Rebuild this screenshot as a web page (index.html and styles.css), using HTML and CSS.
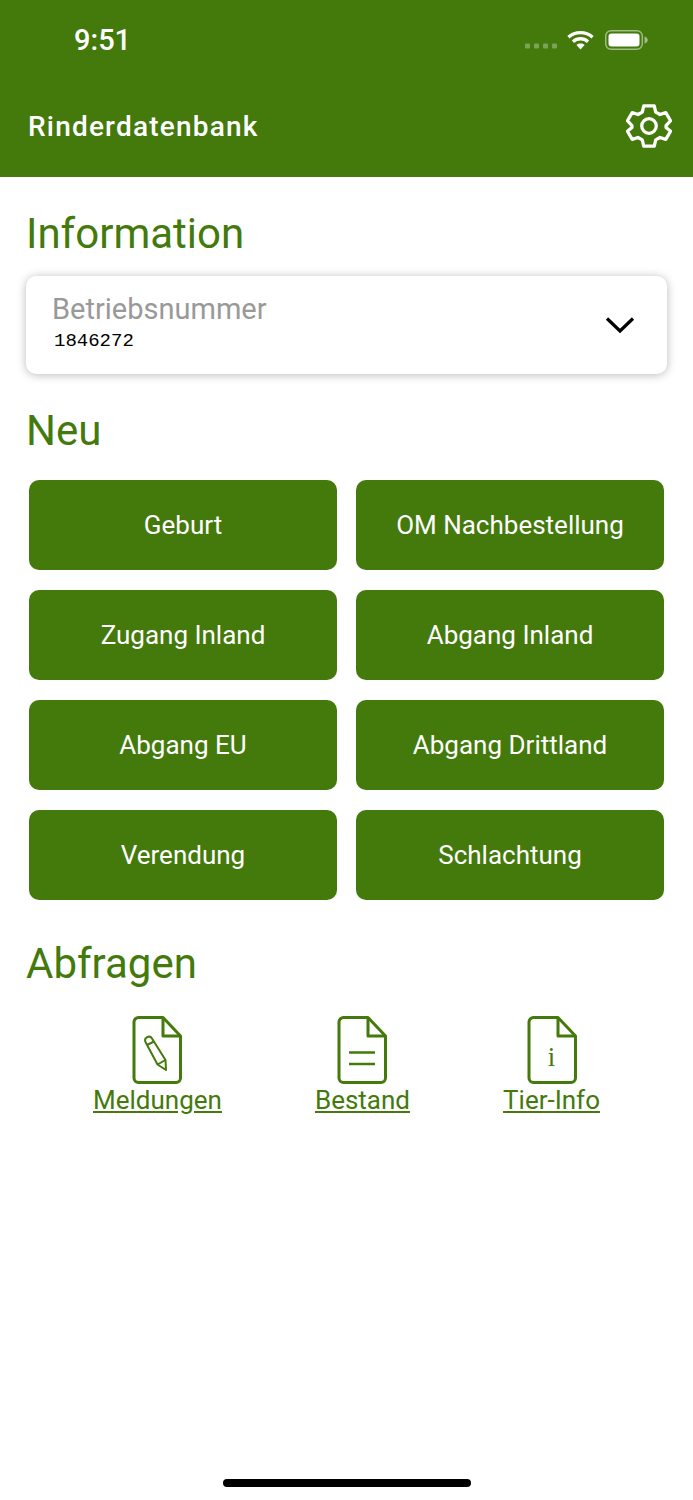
FILE: index.html
```html
<!DOCTYPE html>
<html lang="de">
<head>
    <meta charset="UTF-8">
    <meta name="viewport" content="width=device-width, initial-scale=1.0">
    <title>Rinderdatenbank</title>
    <link rel="stylesheet" href="styles.css">
</head>
<body>
    <header class="top">
        <div class="status">
            <span class="time">9:51</span>
            <div class="status-icons">
                <svg class="signal" width="32" height="6" viewBox="0 0 32 6"><g fill="#fff" opacity="0.3"><rect x="0" y="0.5" width="5" height="5" rx="1"/><rect x="9" y="0.5" width="5" height="5" rx="1"/><rect x="18" y="0.5" width="5" height="5" rx="1"/><rect x="27" y="0.5" width="5" height="5" rx="1"/></g></svg>
                <svg class="wifi" width="27" height="20" viewBox="0 0 28 20"><g fill="none" stroke="#fff" stroke-width="3.4"><path d="M1.5 7.2C8.5 .8 19.5 .8 26.5 7.2"/><path d="M6.2 11.7C10.8 7.7 17.2 7.7 21.8 11.7"/></g><path d="M9.8 15.2C12.2 13.2 15.8 13.2 18.2 15.2L14 19.8Z" fill="#fff"/></svg>
                <svg class="battery" width="43" height="20" viewBox="0 0 43 20"><rect x="0.7" y="0.7" width="36.6" height="18.600" rx="5.500" fill="none" stroke="#fff" stroke-opacity="0.5" stroke-width="1.4"/><rect x="3.500" y="3.500" width="31" height="13" rx="3" fill="#fff"/><path d="M39.500 6.500C41.500 7 42.800 8.500 42.800 10S41.500 13 39.500 13.500Z" fill="#fff" opacity="0.5"/></svg>
            </div>
        </div>
        <div class="toolbar">
            <span class="app-title">Rinderdatenbank</span>
            <svg class="gear" width="46" height="46" viewBox="0 0 48 48" fill="none" stroke="#fff" stroke-width="3.4" stroke-linejoin="round"><path d="M18.5 3H29.5L31 9.5L35.5 12L41.5 10L46.5 18.5L41.8 23.5V25.5L46.5 29.5L41.5 38L35.5 36L31 38.5L29.5 45H18.5L17 38.5L12.5 36L6.5 38L1.5 29.5L6.2 25.5V23.5L1.5 18.5L6.5 10L12.5 12L17 9.5Z"/><circle cx="24" cy="24" r="7.6"/></svg>
        </div>
    </header>

    <main class="content">
        <h2 class="section-title title-info">Information</h2>
        <div class="select-card">
            <div class="select-text">
                <div class="select-label">Betriebsnummer</div>
                <div class="select-value">1846272</div>
            </div>
            <svg class="chevron" width="30" height="18" viewBox="0 0 30 18" fill="none" stroke="#000" stroke-width="3.2"><path d="M2 2.5L15 15L28 2.5"/></svg>
        </div>

        <h2 class="section-title title-new">Neu</h2>
        <div class="button-grid">
            <a class="action-btn">Geburt</a>
            <a class="action-btn">OM Nachbestellung</a>
            <a class="action-btn">Zugang Inland</a>
            <a class="action-btn">Abgang Inland</a>
            <a class="action-btn">Abgang EU</a>
            <a class="action-btn">Abgang Drittland</a>
            <a class="action-btn">Verendung</a>
            <a class="action-btn">Schlachtung</a>
        </div>

        <h2 class="section-title title-query">Abfragen</h2>
        <div class="query-links">
            <a class="query-link">
                <svg width="50" height="68" viewBox="0 0 50 68" fill="none" stroke="#437a0b" stroke-width="3" stroke-linejoin="round"><path d="M31 1.5H6.500A4.500 4.500 0 0 0 2 6V62A4.500 4.500 0 0 0 6.500 66.500H44A4.500 4.500 0 0 0 48.500 62V20Z"/><path d="M31 1.500V20H48.500"/><g stroke-width="2"><path d="M13.500 26A3.700 3.700 0 0 1 20 22.500L33.500 44L34 54L25.500 48.500Z"/><path d="M15 29L22 25.500"/><path d="M25.500 48.500L33.500 44"/></g></svg>
                <span>Meldungen</span>
            </a>
            <a class="query-link">
                <svg width="50" height="68" viewBox="0 0 50 68" fill="none" stroke="#437a0b" stroke-width="3" stroke-linejoin="round"><path d="M31 1.5H6.500A4.500 4.500 0 0 0 2 6V62A4.500 4.500 0 0 0 6.500 66.500H44A4.500 4.500 0 0 0 48.500 62V20Z"/><path d="M31 1.500V20H48.500"/><path d="M12 36.500H38M12 48H38" stroke-width="2.400"/></svg>
                <span>Bestand</span>
            </a>
            <a class="query-link">
                <span class="doc-wrap">
                    <svg width="50" height="68" viewBox="0 0 50 68" fill="none" stroke="#437a0b" stroke-width="3" stroke-linejoin="round"><path d="M31 1.5H6.500A4.500 4.500 0 0 0 2 6V62A4.500 4.500 0 0 0 6.500 66.500H44A4.500 4.500 0 0 0 48.500 62V20Z"/><path d="M31 1.500V20H48.500"/></svg>
                    <b class="doc-i">i</b>
                </span>
                <span>Tier-Info</span>
            </a>
        </div>
    </main>

    <div class="home-bar"></div>
</body>
</html>
```

FILE: styles.css
```css
/* Reset styles */
* {
    margin: 0;
    padding: 0;
    box-sizing: border-box;
}

body {
    height: 1500px;
    display: flex;
    flex-direction: column;
    overflow: hidden;
    font-family: Roboto, "Liberation Sans", sans-serif;
    background-color: #fff;
    color: #437a0b;
}

/* Green header with status bar */
.top {
    height: 177px;
    background-color: #437a0b;
    color: #fff;
    flex-shrink: 0;
}

.status {
    height: 79px;
    padding: 0 45px 0 74px;
    display: flex;
    justify-content: space-between;
    align-items: center;
}

.time {
    font-size: 29px;
    font-weight: 500;
}

.status-icons {
    display: flex;
    align-items: center;
}

.signal {
    margin-top: 12px;
    margin-right: 10px;
}

.wifi {
    margin-right: 11px;
}

.toolbar {
    padding: 0 21px 0 28px;
    height: 94px;
    display: flex;
    justify-content: space-between;
    align-items: center;
}

.app-title {
    font-size: 28px;
    font-weight: 500;
    letter-spacing: 1.2px;
}

/* Page content */
.content {
    flex: 1;
}

.section-title {
    font-size: 42px;
    font-weight: 400;
    line-height: 50px;
    margin-left: 26px;
}

.title-info {
    margin-top: 32px;
}

.title-new {
    margin-top: 32px;
}

.title-query {
    margin-top: 39px;
}

.select-card {
    margin: 17px 26px 0;
    height: 98px;
    padding: 0 32px 0 26px;
    border-radius: 10px;
    background-color: #fff;
    box-shadow: 0 1px 10px rgba(0, 0, 0, 0.28);
    display: flex;
    justify-content: space-between;
    align-items: center;
}

.select-text {
    padding-bottom: 7px;
}

.select-label {
    font-size: 29px;
    line-height: 34px;
    color: #999;
}

.select-value {
    font-family: "Liberation Mono", monospace;
    font-size: 19px;
    line-height: 20px;
    color: #000;
    margin: 5px 0 0 2px;
}

.button-grid {
    display: grid;
    grid-template-columns: 308px 308px;
    grid-auto-rows: 90px;
    column-gap: 19px;
    row-gap: 20px;
    margin: 24px 0 0 29px;
}

.action-btn {
    background-color: #437a0b;
    color: #fff;
    border-radius: 10px;
    font-size: 26px;
    display: flex;
    align-items: center;
    justify-content: center;
}

.query-links {
    display: flex;
    justify-content: space-evenly;
    margin-top: 27px;
}

.query-link {
    display: flex;
    flex-direction: column;
    align-items: center;
    font-size: 26px;
    line-height: 30px;
    text-decoration: underline;
}

.query-link svg {
    display: block;
    margin-bottom: 1px;
}

.doc-wrap {
    position: relative;
    display: block;
}

.doc-i {
    position: absolute;
    left: 0;
    right: 0;
    top: 26px;
    text-align: center;
    font-family: "Liberation Serif", serif;
    font-weight: 400;
    font-size: 27px;
    line-height: 30px;
}

.home-bar {
    width: 248px;
    height: 8px;
    border-radius: 4px;
    background-color: #000;
    margin: 0 auto 13px;
    flex-shrink: 0;
}
```
